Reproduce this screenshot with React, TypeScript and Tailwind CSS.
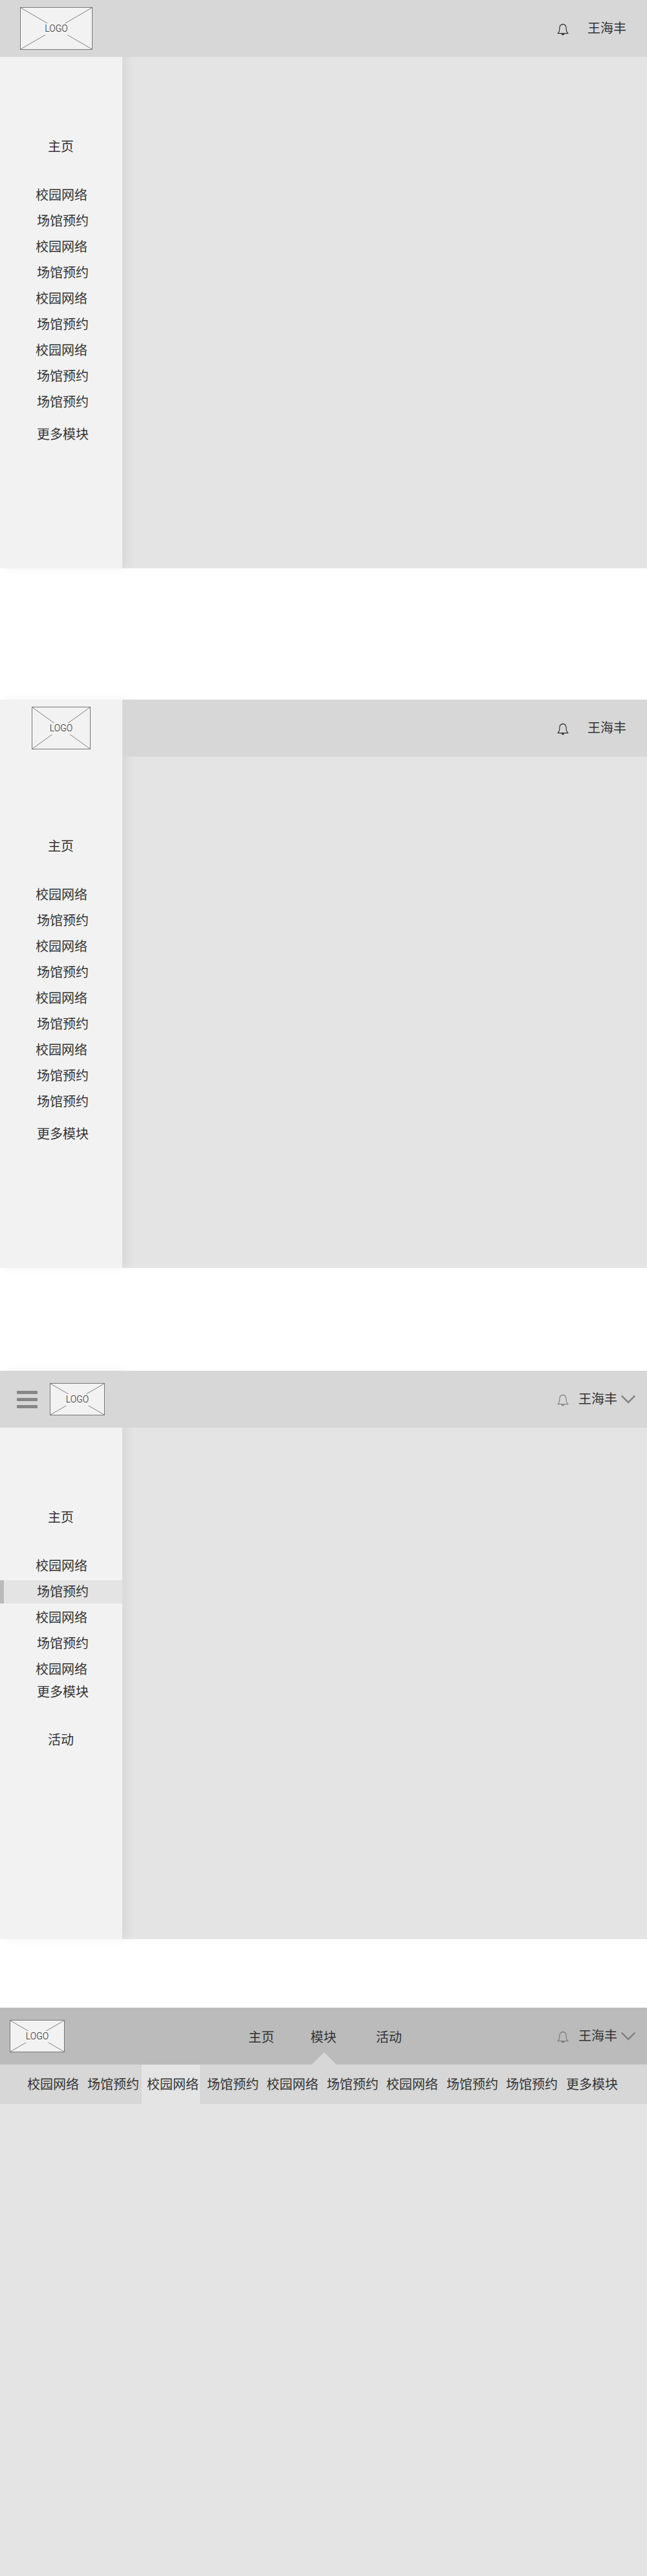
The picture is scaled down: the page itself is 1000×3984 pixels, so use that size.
import React from "react";

type Entry = { label: string; className: string };

const campus: Entry = { label: "校园网络", className: "h-10 pl-[55px]" };
const venue: Entry = { label: "场馆预约", className: "h-10 pl-[57px]" };

const fullMenu: Entry[] = [
  campus, venue, campus, venue, campus, venue, campus, venue, venue,
  { label: "更多模块", className: "mt-2.5 h-10 pl-[57px]" },
];

const shortMenu: Entry[] = [
  campus,
  { label: "场馆预约", className: "mt-[3px] mb-px h-9 border-l-[6px] border-[#bbb] bg-[#e4e4e4] pl-[51px] pb-0.5" },
  campus, venue, campus,
  { label: "更多模块", className: "-mt-[5px] h-10 pl-[57px]" },
  { label: "活动", className: "mt-[34px] h-10 pl-[74px]" },
];

const topMenu: Entry[] = [
  { label: "校园网络", className: "ml-[34px] w-[92px] pl-2" },
  { label: "场馆预约", className: "w-[93px] pl-[9px]" },
  { label: "校园网络", className: "w-[90px] bg-[#e4e4e4] pl-2" },
  { label: "场馆预约", className: "w-[94px] pl-[11px]" },
  { label: "校园网络", className: "w-[93px] pl-[9px]" },
  { label: "场馆预约", className: "w-[92px] pl-[9px]" },
  { label: "校园网络", className: "w-[92px] pl-[9px]" },
  { label: "场馆预约", className: "w-[93px] pl-[10px]" },
  { label: "场馆预约", className: "w-[92px] pl-[9px]" },
  { label: "更多模块", className: "w-[100px] pl-[10px]" },
];

function Logo({ className }: { className: string }) {
  return (
    <div className={`relative flex shrink-0 items-center justify-center border border-[#777] bg-[#f2f2f2] ${className}`}>
      <svg className="absolute inset-0 h-full w-full" viewBox="0 0 100 100" preserveAspectRatio="none" stroke="#808080">
        <path d="M0 0L100 100M100 0L0 100" vectorEffect="non-scaling-stroke" />
      </svg>
      <span className="relative mt-px flex h-[18px] items-center bg-[#f2f2f2] font-[Roboto,sans-serif] text-[14px] font-light leading-none text-[#222]">
        <span className="-mt-0.5">LOGO</span>
      </span>
    </div>
  );
}

function Bell({ className }: { className: string }) {
  return (
    <svg className={`h-[19px] w-[18px] shrink-0 ${className}`} viewBox="0 0 18 19" fill="none" stroke="currentColor" strokeWidth="1.2">
      <path d="M1 15.6C3.3 13.7 3.8 11.8 3.8 8.4C3.8 4 5.6 1.7 9 1.7S14.2 4 14.2 8.4C14.2 11.8 14.7 13.7 17 15.6Z" strokeLinejoin="round" />
      <path d="M8 1.5A1 1 0 0 1 10 1.5ZM6.5 16.2H11.5A2.5 2.3 0 0 1 6.5 16.2Z" fill="currentColor" stroke="none" />
    </svg>
  );
}

function Chevron() {
  return (
    <svg className="ml-[6px] h-[13px] w-[22px] shrink-0" viewBox="0 0 22 13" fill="none" stroke="#848484" strokeWidth="2.6">
      <path d="M1.4 1.4L11 11L20.6 1.4" strokeLinecap="round" />
    </svg>
  );
}

function Sidebar({ entries, top = null }: { entries: Entry[]; top?: React.ReactNode }) {
  return (
    <aside className="col-start-1 row-span-2 row-start-1 flex flex-col bg-[#f2f2f2] shadow-[8px_0_13px_rgba(0,0,0,0.05)]">
      <div className="h-[206px] shrink-0">{top}</div>
      <div className="flex h-10 items-center pl-[74px]">主页</div>
      <nav className="mt-[35px] flex flex-col">
        {entries.map((e, i) => (
          <a key={i} className={`flex items-center whitespace-nowrap ${e.className}`}>{e.label}</a>
        ))}
      </nav>
    </aside>
  );
}

const screen = "grid h-[879px] grid-cols-[189px_1fr] grid-rows-[88px_1fr]";
const backdrop = "col-start-2 row-start-2 bg-[#e4e4e4]";

export default function App() {
  return (
    <main className="h-[3984px] w-[1000px] overflow-hidden bg-white font-['Noto_Sans_CJK_SC',sans-serif] text-[20px] leading-[20px] text-[#333]">
      <section className={screen}>
        <div className={backdrop} />
        <Sidebar entries={fullMenu} />
        <header className="z-10 col-span-2 col-start-1 row-start-1 flex items-center bg-[#d7d7d7] pl-[31px]">
          <Logo className="h-[66px] w-[112px]" />
          <Bell className="ml-auto mt-[3px]" />
          <span className="ml-[29px] mr-8 -mt-0.5">王海丰</span>
        </header>
      </section>

      <section className={`mt-[203px] ${screen}`}>
        <div className={backdrop} />
        <Sidebar entries={fullMenu} top={<Logo className="ml-[49px] mt-[11px] h-[66px] w-[91px]" />} />
        <header className="z-10 col-start-2 row-start-1 flex items-center justify-end bg-[#d7d7d7]">
          <Bell className="mt-[3px]" />
          <span className="ml-[29px] mr-8 -mt-0.5">王海丰</span>
        </header>
      </section>

      <section className={`mt-[159px] ${screen}`}>
        <div className={backdrop} />
        <Sidebar entries={shortMenu} />
        <header className="z-10 col-span-2 col-start-1 row-start-1 flex items-center bg-[#d7d7d7] pl-[26px]">
          <div className="mt-px flex w-8 flex-col gap-1.5">
            <i className="h-[5px] rounded-[1px] bg-[#868686]" />
            <i className="h-[5px] rounded-[1px] bg-[#868686]" />
            <i className="h-[5px] rounded-[1px] bg-[#868686]" />
          </div>
          <Logo className="ml-[19px] h-[50px] w-[85px]" />
          <Bell className="ml-auto mt-[3px] text-[#848484]" />
          <span className="ml-[15px] -mt-0.5">王海丰</span>
          <span className="mr-[18px] mt-px flex"><Chevron /></span>
        </header>
      </section>

      <section className="mt-[106px] flex h-[879px] flex-col bg-[#e4e4e4]">
        <header className="relative flex h-[88px] items-center bg-[#bbb] pl-[15px]">
          <Logo className="h-[50px] w-[85px]" />
          <nav className="ml-[284px] mt-0.5 flex">
            <a className="w-24">主页</a>
            <a className="w-[101px]">模块</a>
            <a className="w-10">活动</a>
          </nav>
          <Bell className="ml-auto mt-[3px] text-[#7b7b7b]" />
          <span className="ml-[15px] -mt-0.5">王海丰</span>
          <span className="mr-[18px] mt-px flex"><Chevron /></span>
          <svg className="absolute bottom-0 left-[482px] h-[19px] w-[38px]" viewBox="0 0 38 19">
            <path d="M0 19L19 0L38 19Z" fill="#d7d7d7" />
          </svg>
        </header>
        <nav className="flex h-[61px] bg-[#d7d7d7]">
          {topMenu.map((e, i) => (
            <a key={i} className={`flex shrink-0 items-center whitespace-nowrap pb-0.5 ${e.className}`}>{e.label}</a>
          ))}
        </nav>
      </section>
    </main>
  );
}
